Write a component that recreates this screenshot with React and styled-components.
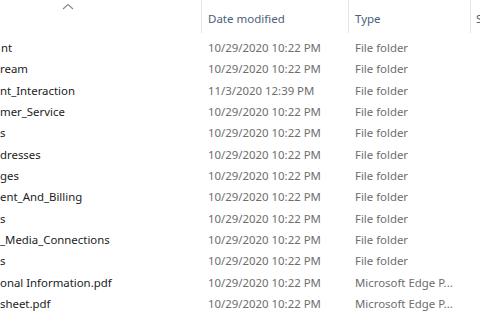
import React from 'react';
import styled, { createGlobalStyle } from 'styled-components';

const GlobalStyle = createGlobalStyle`
  html, body {
    margin: 0;
    padding: 0;
    background: #fff;
  }
  body {
    font-family: "Noto Sans", "Open Sans", sans-serif;
    overflow: hidden;
  }
`;

const Pane = styled.div`
  width: 480px;
  height: 320px;
  background: #fff;
  overflow: hidden;
  display: flex;
  flex-direction: column;
`;

const Header = styled.div`
  display: grid;
  grid-template-columns: 201px 147px 122px 10px;
  height: 37px;
  flex-shrink: 0;
`;

const HeadCell = styled.div`
  position: relative;
  display: flex;
  align-items: center;
  padding-left: ${p => p.$pad || 6}px;
  padding-top: 3px;
  font-size: 11.5px;
  color: #4c607a;
  white-space: nowrap;
  overflow: hidden;
  border-left: ${p => (p.$line ? '1px solid #e5e5e5' : 'none')};
  height: 33px;
  box-sizing: border-box;
`;

const SortArrow = styled.svg`
  position: absolute;
  left: 62px;
  top: 3px;
`;

const List = styled.div`
  display: flex;
  flex-direction: column;
`;

const Row = styled.div`
  display: grid;
  grid-template-columns: 208px 147px 125px;
  height: 21.33px;
  align-items: center;
  font-size: 11.4px;
  white-space: nowrap;
`;

const Name = styled.div`
  color: #1b1b1b;
  overflow: hidden;
  padding-left: ${p => p.$indent || 0}px;
`;

const Muted = styled.div`
  color: #6d6d6d;
  overflow: hidden;
`;

const rows = [
  ['nt', '10/29/2020 10:22 PM', 'File folder', 1],
  ['ream', '10/29/2020 10:22 PM', 'File folder', 0],
  ['nt_Interaction', '11/3/2020 12:39 PM', 'File folder', 0],
  ['mer_Service', '10/29/2020 10:22 PM', 'File folder', 0],
  ['s', '10/29/2020 10:22 PM', 'File folder', 0],
  ['dresses', '10/29/2020 10:22 PM', 'File folder', 0],
  ['ges', '10/29/2020 10:22 PM', 'File folder', 0],
  ['ent_And_Billing', '10/29/2020 10:22 PM', 'File folder', 0],
  ['s', '10/29/2020 10:22 PM', 'File folder', 0],
  ['_Media_Connections', '10/29/2020 10:22 PM', 'File folder', 0],
  ['s', '10/29/2020 10:22 PM', 'File folder', 0],
  ['onal Information.pdf', '10/29/2020 10:22 PM', 'Microsoft Edge P...', 0],
  ['sheet.pdf', '10/29/2020 10:22 PM', 'Microsoft Edge P...', 0],
];

export default function App() {
  return (
    <Pane>
      <GlobalStyle />
      <Header>
        <HeadCell>
          <SortArrow width="12" height="7" viewBox="0 0 12 7">
            <path d="M1 6 L6 1.5 L11 6" fill="none" stroke="#8a8a8a" strokeWidth="1.1" />
          </SortArrow>
        </HeadCell>
        <HeadCell $line>Date modified</HeadCell>
        <HeadCell $line>Type</HeadCell>
        <HeadCell $line $pad={5}>Size</HeadCell>
      </Header>
      <List>
        {rows.map(([name, date, type, indent], i) => (
          <Row key={i}>
            <Name $indent={indent}>{name}</Name>
            <Muted>{date}</Muted>
            <Muted>{type}</Muted>
          </Row>
        ))}
      </List>
    </Pane>
  );
}
